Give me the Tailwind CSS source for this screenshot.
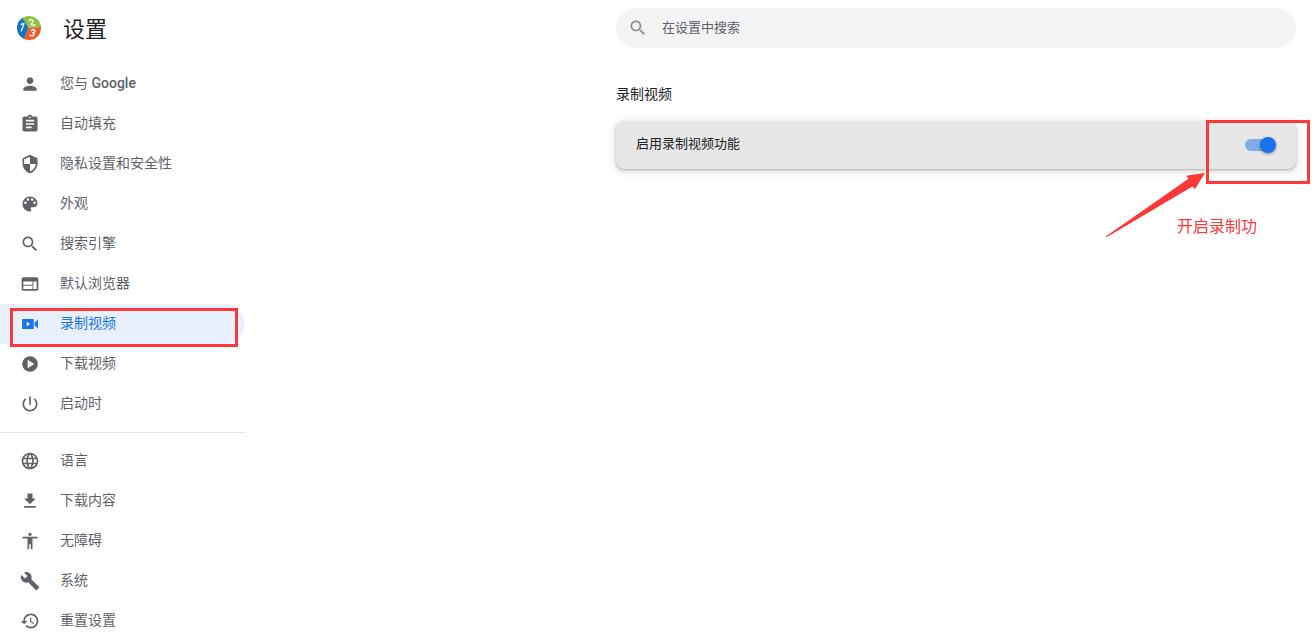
<!DOCTYPE html>
<html lang="zh-CN">
<head>
  <meta charset="UTF-8">
  <meta name="viewport" content="width=device-width, initial-scale=1.0">
  <title>设置</title>
  <script src="https://cdn.jsdelivr.net/npm/@tailwindcss/browser@4"></script>
</head>
<body class="bg-white text-[#202124] font-['Roboto','Noto_Sans_CJK_SC',sans-serif]">

  <div class="flex h-screen overflow-hidden">

    <!-- Sidebar -->
    <aside class="w-[246px] shrink-0">
      <header class="flex h-16 items-center gap-[22px] pl-[17px] pb-1">
        <svg class="size-6 shrink-0 -mt-1" viewBox="0.5 0.5 25 25" aria-hidden="true">
          <defs><clipPath id="disc"><circle cx="13" cy="13" r="12.5" /></clipPath></defs>
          <g clip-path="url(#disc)">
            <path fill="#8cc63f" d="M12.500 12.800 5 0h21v12z" />
            <path fill="#f15a29" d="M12.500 12.800 26 12v14H7z" />
            <path fill="#0f75bc" d="M12.500 12.800 7 26H0V0h5z" />
          </g>
          <g fill="none" stroke="#fff" stroke-width="1.4" stroke-linecap="round" stroke-linejoin="round">
            <path d="M4.800 9.200 7.800 8.200 5 16" />
            <path d="M13.200 5.300c1-1.800 4.300-1.300 3.900.6-.3 1.500-2.200 2.500-1.800 4.200 1.200-1 2.500.8 4.200-.3" />
            <path d="M15.500 15.600c1.500-1.200 4.300-.9 3.800.8-.4 1.200-1.500 1.500-2.500 1.700 1.500 0 1.900 1.100 1.100 2.200-1 1.300-3 1.200-4.100.2" />
          </g>
        </svg>
        <h1 class="text-[22px] leading-8">设置</h1>
      </header>

      <nav class="text-sm text-[#5f6368]">
        <a href="#people" class="flex h-10 items-center gap-5 pl-5">
          <svg class="size-5" viewBox="0 0 24 24" fill="currentColor"><path d="M12 12c2.210 0 4-1.790 4-4s-1.790-4-4-4-4 1.790-4 4 1.790 4 4 4zm0 2c-2.670 0-8 1.340-8 4v2h16v-2c0-2.660-5.330-4-8-4z" /></svg>
          <span class="-mt-0.5">您与 <span class="font-medium">Google</span></span>
        </a>
        <a href="#autofill" class="flex h-10 items-center gap-5 pl-5">
          <svg class="size-5" viewBox="0 0 24 24" fill="currentColor"><path d="M19 3h-4.180C14.400 1.840 13.300 1 12 1c-1.300 0-2.400.84-2.820 2H5c-1.100 0-2 .9-2 2v14c0 1.100.9 2 2 2h14c1.100 0 2-.9 2-2V5c0-1.100-.9-2-2-2zm-7 0c.55 0 1 .45 1 1s-.45 1-1 1-1-.45-1-1 .45-1 1-1zm2 14H7v-2h7v2zm3-4H7v-2h10v2zm0-4H7V7h10v2z" /></svg>
          <span class="-mt-0.5">自动填充</span>
        </a>
        <a href="#privacy" class="flex h-10 items-center gap-5 pl-5">
          <svg class="size-5" viewBox="0 0 24 24" fill="currentColor"><path d="M12 1 3 5v6c0 5.550 3.840 10.740 9 12 5.160-1.260 9-6.450 9-12V5l-9-4zm0 10.990h7c-.53 4.120-3.280 7.790-7 8.940V12H5V6.300l7-3.110v8.800z" /></svg>
          <span class="-mt-0.5">隐私设置和安全性</span>
        </a>
        <a href="#appearance" class="flex h-10 items-center gap-5 pl-5">
          <svg class="size-5" viewBox="0 0 24 24" fill="currentColor"><path d="M12 3c-4.970 0-9 4.030-9 9s4.030 9 9 9c.83 0 1.500-.67 1.500-1.500 0-.39-.15-.74-.39-1.010-.23-.26-.38-.61-.38-.99 0-.83.67-1.500 1.500-1.500H16c2.760 0 5-2.240 5-5 0-4.420-4.030-8-9-8zm-5.500 9c-.83 0-1.500-.67-1.500-1.500S5.670 9 6.500 9 8 9.670 8 10.500 7.330 12 6.500 12zm3-4C8.670 8 8 7.330 8 6.500S8.670 5 9.500 5s1.500.67 1.500 1.500S10.330 8 9.500 8zm5 0c-.83 0-1.500-.67-1.500-1.500S13.670 5 14.500 5s1.500.67 1.500 1.500S15.330 8 14.500 8zm3 4c-.83 0-1.500-.67-1.500-1.500S16.670 9 17.500 9s1.500.67 1.500 1.500-.67 1.500-1.500 1.500z" /></svg>
          <span class="-mt-0.5">外观</span>
        </a>
        <a href="#search" class="flex h-10 items-center gap-5 pl-5">
          <svg class="size-5" viewBox="0 0 24 24" fill="currentColor"><path d="M15.500 14h-.79l-.28-.27C15.410 12.590 16 11.110 16 9.500 16 5.910 13.090 3 9.500 3S3 5.910 3 9.500 5.910 16 9.500 16c1.610 0 3.090-.59 4.230-1.570l.27.28v.79l5 4.990L20.490 19l-4.990-5zm-6 0C7.010 14 5 11.990 5 9.500S7.010 5 9.500 5 14 7.010 14 9.500 11.990 14 9.500 14z" /></svg>
          <span class="-mt-0.5">搜索引擎</span>
        </a>
        <a href="#browser" class="flex h-10 items-center gap-5 pl-5">
          <svg class="size-5" viewBox="0 0 24 24" fill="currentColor"><path d="M20 4H4c-1.100 0-1.990.9-1.990 2L2 18c0 1.100.9 2 2 2h16c1.100 0 2-.9 2-2V6c0-1.100-.9-2-2-2zm-5 14H4v-4h11v4zm0-5H4V9h11v4zm5 5h-4V9h4v9z" /></svg>
          <span class="-mt-0.5">默认浏览器</span>
        </a>
        <a href="#record" aria-current="page" class="relative mr-0.5 flex h-10 items-center gap-5 rounded-r-full bg-[#e8f0fe] pl-5 text-[#1a73e8]">
          <svg class="size-5" viewBox="0 0 24 24" fill="currentColor"><path fill-rule="evenodd" d="M3.500 6h12a1 1 0 0 1 1 1v10a1 1 0 0 1-1 1h-12a1 1 0 0 1-1-1V7a1 1 0 0 1 1-1zM8 9.300v5.400l4.200-2.700z" /><path d="M17.400 10.500 21.500 6.500v11l-4.100-4z" /></svg>
          <span class="-mt-0.5">录制视频</span>
          <span class="absolute top-1 right-1.5 left-2.5 h-[39px] border-3 border-[#fc3838]"></span>
        </a>
        <a href="#video" class="flex h-10 items-center gap-5 pl-5">
          <svg class="size-5" viewBox="0 0 24 24" fill="currentColor"><path fill-rule="evenodd" d="M12 2.600a9.400 9.400 0 1 0 0 18.800 9.400 9.400 0 0 0 0-18.800zM9.200 7v10l7.800-5z" /></svg>
          <span class="-mt-0.5">下载视频</span>
        </a>
        <a href="#startup" class="flex h-10 items-center gap-5 pl-5">
          <svg class="size-5" viewBox="0 0 24 24" fill="currentColor"><path d="M13 3h-2v10h2V3zm4.830 2.170-1.420 1.420C17.990 7.860 19 9.810 19 12c0 3.870-3.130 7-7 7s-7-3.130-7-7c0-2.190 1.010-4.140 2.580-5.420L6.170 5.170C4.230 6.820 3 9.260 3 12c0 4.970 4.030 9 9 9s9-4.030 9-9c0-2.740-1.230-5.180-3.170-6.830z" /></svg>
          <span class="-mt-0.5">启动时</span>
        </a>

        <hr class="my-2 border-black/10">

        <a href="#languages" class="flex h-10 items-center gap-5 pl-5">
          <svg class="size-5" viewBox="0 0 24 24" fill="currentColor"><path d="M11.990 2C6.470 2 2 6.480 2 12s4.470 10 9.990 10C17.520 22 22 17.520 22 12S17.520 2 11.990 2zm6.930 6h-2.950c-.32-1.250-.78-2.450-1.380-3.560 1.840.63 3.370 1.910 4.330 3.560zM12 4.040c.83 1.200 1.480 2.530 1.910 3.960h-3.820c.43-1.430 1.080-2.760 1.910-3.960zM4.260 14C4.100 13.360 4 12.690 4 12s.1-1.360.26-2h3.380c-.08.66-.14 1.320-.14 2s.06 1.340.14 2H4.260zm.82 2h2.950c.32 1.250.78 2.450 1.380 3.560-1.840-.63-3.370-1.900-4.330-3.560zm2.950-8H5.080c.96-1.660 2.490-2.930 4.330-3.560C8.810 5.550 8.350 6.750 8.030 8zM12 19.960c-.83-1.200-1.480-2.530-1.910-3.960h3.820c-.43 1.430-1.080 2.760-1.910 3.960zM14.340 14H9.660c-.09-.66-.16-1.320-.16-2s.07-1.350.16-2h4.680c.09.65.16 1.320.16 2s-.07 1.340-.16 2zm.25 5.560c.6-1.110 1.060-2.310 1.380-3.560h2.950c-.96 1.650-2.490 2.930-4.330 3.560zM16.360 14c.08-.66.14-1.320.14-2s-.06-1.340-.14-2h3.380c.16.64.26 1.310.26 2s-.1 1.360-.26 2h-3.380z" /></svg>
          <span class="-mt-0.5">语言</span>
        </a>
        <a href="#downloads" class="flex h-10 items-center gap-5 pl-5">
          <svg class="size-5" viewBox="0 0 24 24" fill="currentColor"><path d="M19 9h-4V3H9v6H5l7 7 7-7zM5 18v2h14v-2H5z" /></svg>
          <span class="-mt-0.5">下载内容</span>
        </a>
        <a href="#accessibility" class="flex h-10 items-center gap-5 pl-5">
          <svg class="size-5" viewBox="0 0 24 24" fill="currentColor"><path d="M12 2c1.100 0 2 .9 2 2s-.9 2-2 2-2-.9-2-2 .9-2 2-2zm9 7h-6v13h-2v-6h-2v6H9V9H3V7h18v2z" /></svg>
          <span class="-mt-0.5">无障碍</span>
        </a>
        <a href="#system" class="flex h-10 items-center gap-5 pl-5">
          <svg class="size-5" viewBox="0 0 24 24" fill="currentColor"><path d="M22.700 19l-9.100-9.100c.9-2.300.4-5-1.500-6.900-2-2-5-2.400-7.400-1.300L9 6 6 9 1.600 4.700C.4 7.100.9 10.100 2.900 12.100c1.900 1.900 4.600 2.400 6.900 1.500l9.100 9.100c.4.4 1 .4 1.400 0l2.300-2.300c.5-.4.5-1.100.1-1.400z" /></svg>
          <span class="-mt-0.5">系统</span>
        </a>
        <a href="#reset" class="flex h-10 items-center gap-5 pl-5">
          <svg class="size-5" viewBox="0 0 24 24" fill="currentColor"><path d="M13 3c-4.970 0-9 4.030-9 9H1l3.890 3.890.07.14L9 12H6c0-3.870 3.130-7 7-7s7 3.130 7 7-3.130 7-7 7c-1.930 0-3.680-.79-4.940-2.060l-1.420 1.420C8.270 19.990 10.510 21 13 21c4.970 0 9-4.030 9-9s-4.030-9-9-9zm-1 5v5l4.280 2.540.72-1.210-3.500-2.080V8H12z" /></svg>
          <span class="-mt-0.5">重置设置</span>
        </a>
      </nav>
    </aside>

    <!-- Content -->
    <main class="flex flex-1 justify-end pr-[19px]">
      <div class="w-full max-w-[680px] pt-2">
        <label class="flex h-10 items-center gap-3.5 rounded-full bg-[#f1f3f4] px-3">
          <svg class="size-5 text-[#8b8d90]" viewBox="0 0 24 24" fill="currentColor"><path d="M15.500 14h-.79l-.28-.27C15.410 12.590 16 11.110 16 9.500 16 5.910 13.090 3 9.500 3S3 5.910 3 9.500 5.910 16 9.500 16c1.610 0 3.090-.59 4.230-1.570l.27.28v.79l5 4.990L20.490 19l-4.990-5zm-6 0C7.010 14 5 11.990 5 9.500S7.010 5 9.500 5 14 7.010 14 9.500 11.990 14 9.500 14z" /></svg>
          <input type="search" aria-label="在设置中搜索" placeholder="在设置中搜索" class="flex-1 bg-transparent text-[13px] outline-none placeholder:text-[#5f6368]">
        </label>

        <h2 class="mt-9 text-sm leading-5">录制视频</h2>

        <section class="relative mt-[17px] flex h-12 items-center justify-between rounded-lg bg-[#e7e7e7] px-5 shadow-[0_1px_2px_rgba(60,64,67,0.3),0_2px_6px_2px_rgba(60,64,67,0.15)]">
          <label for="record" class="-mt-0.5 text-[13px]">启用录制视频功能</label>
          <input id="record" type="checkbox" role="switch" checked class="relative h-3 w-[31px] appearance-none before:absolute before:top-0 before:left-0 before:h-3 before:w-7 before:rounded-full before:bg-[#1a73e8]/50 before:content-[''] after:absolute after:-top-0.5 after:right-0 after:size-4 after:rounded-full after:bg-[#1a73e8] after:shadow-[0_1px_3px_rgba(0,0,0,0.4)] after:content-['']">

          <!-- Callout -->
          <span class="absolute -top-px -right-3.5 h-16 w-[104px] border-3 border-[#fc3838]"></span>
          <svg class="absolute top-[51px] right-[91px] h-[66px] w-[100px]" viewBox="0 0 100 66" aria-hidden="true">
            <path fill="#fc3838" d="M100 1 81 3.700l2.500 3L1 64.300l.5 1L87.500 14.500l2.500 2.500z" />
          </svg>
          <p class="absolute top-[94px] right-[39px] text-base leading-6 whitespace-nowrap text-[#fc3838]">开启录制功</p>
        </section>
      </div>
    </main>
  </div>

</body>
</html>
